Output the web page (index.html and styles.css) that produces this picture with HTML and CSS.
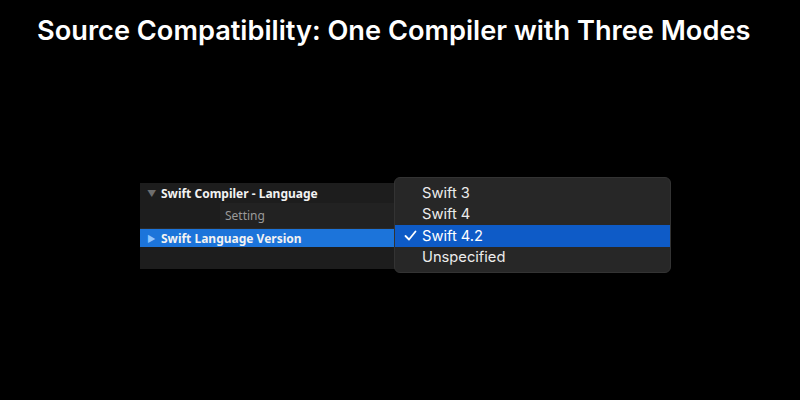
FILE: index.html
```html
<!DOCTYPE html>
<html>
<head>
<meta charset="utf-8">
<link rel="stylesheet" href="styles.css">
</head>
<body>
<h1 class="title">Source Compatibility: One Compiler with Three Modes</h1>
<div class="stage">
  <div class="panel">
    <div class="row row-head"><span class="tri down">▼</span><span class="label">Swift Compiler - Language</span></div>
    <div class="row row-setting"><span class="setting">Setting</span></div>
    <div class="row row-sel"><span class="tri right">▶</span><span class="label">Swift Language Version</span></div>
    <div class="row row-empty"></div>
  </div>
  <div class="menu">
    <div class="item"><span class="check"></span>Swift 3</div>
    <div class="item"><span class="check"></span>Swift 4</div>
    <div class="item active"><span class="check"><svg width="13" height="11" viewBox="0 0 13 11"><path d="M1.5 6 L5 9.5 L11.5 1.5" fill="none" stroke="#fff" stroke-width="1.8" stroke-linecap="round" stroke-linejoin="round"/></svg></span>Swift 4.2</div>
    <div class="item"><span class="check"></span>Unspecified</div>
  </div>
</div>
</body>
</html>
```
FILE: styles.css
```css
html, body {
  margin: 0;
  padding: 0;
  background: #000;
  width: 800px;
  height: 400px;
  overflow: hidden;
}
.title {
  margin: 0;
  padding: 13px 0 0 37px;
  font-family: Inter, "Noto Sans", sans-serif;
  font-weight: 600;
  font-size: 27.2px;
  letter-spacing: 0;
  line-height: 36px;
  color: #fff;
}
.stage {
  position: relative;
  margin: 128px 0 0 140px;
  padding-top: 6px;
  width: 540px;
  height: 100px;
}
.panel {
  width: 262px;
  background: #1d1d1d;
  font-family: "Noto Sans", Inter, sans-serif;
  font-size: 12px;
  font-weight: 700;
  color: #f2f2f2;
}
.row {
  display: flex;
  align-items: center;
}
.row-head {
  height: 20px;
}
.row-setting {
  height: 26px;
  padding-left: 80px;
  box-sizing: border-box;
  border-bottom: 1px solid #2a2a2a;
}
.setting {
  display: flex;
  align-items: center;
  height: 100%;
  flex: 1;
  padding-left: 5px;
  background: #222;
  font-weight: 400;
  color: #9a9a9a;
}
.row-sel {
  height: 18px;
  background: #1c74da;
}
.row-empty {
  height: 22px;
}
.tri {
  width: 10px;
  margin: 0 4px 0 7px;
  font-size: 9px;
}
.tri.down { color: #6e6e6e; }
.tri.right { color: #8ec5ff; }
.menu {
  position: absolute;
  left: 254px;
  top: 0;
  width: 277px;
  box-sizing: border-box;
  padding: 4px 0;
  background: #272727;
  border: 1px solid #333;
  border-radius: 6px;
  font-family: Inter, "Noto Sans", sans-serif;
  font-size: 14.7px;
  color: #ececec;
}
.item {
  display: flex;
  align-items: center;
  height: 21.5px;
}
.item.active {
  background: #0e5bc7;
  color: #fff;
}
.check {
  width: 23px;
  padding-left: 4px;
  display: flex;
  justify-content: center;
}
```
